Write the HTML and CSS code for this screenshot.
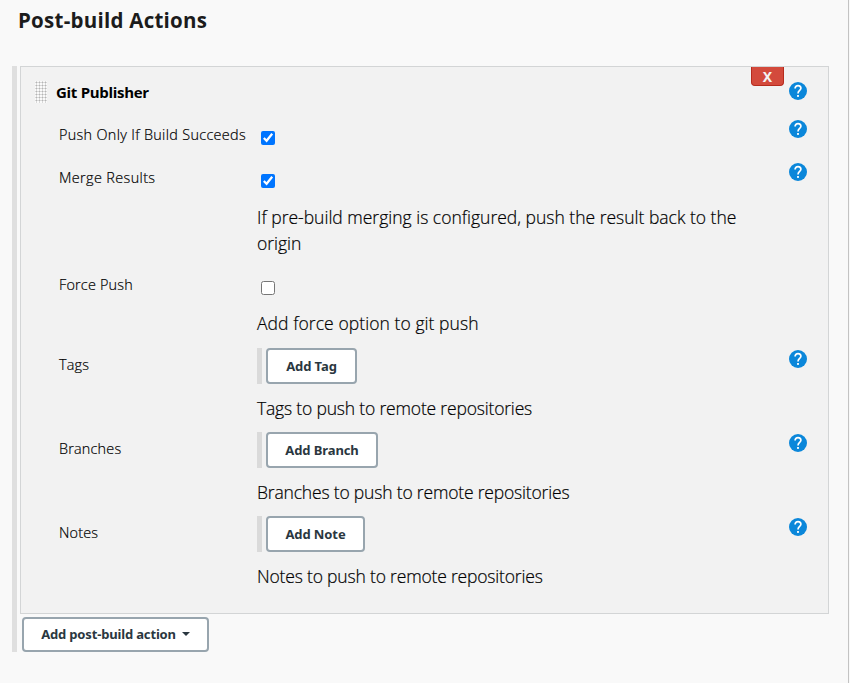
FILE: index.html
```html
<!DOCTYPE html>
<html lang="en">
<head>
<meta charset="utf-8">
<title>Post-build Actions</title>
<link rel="stylesheet" href="styles.css">
</head>
<body>
<svg class="defs" width="0" height="0" aria-hidden="true">
  <symbol id="help" viewBox="0 0 18 18">
    <circle cx="9" cy="9" r="9" fill="#0b87da"/>
    <path d="M6.100 6.600C6.100 4.600 7.300 3.600 9 3.600s2.900 1 2.900 2.700C11.900 8.300 9 8.600 9 11.400" fill="none" stroke="#fff" stroke-width="1.700"/>
    <rect x="8.100" y="13" width="1.800" height="1.900" fill="#fff"/>
  </symbol>
</svg>
<main class="page">
  <h1>Post-build Actions</h1>
  <div class="actions">
    <section class="panel">
      <header class="panel-head">
        <span class="grip"></span>
        <h2>Git Publisher</h2>
        <button class="delete">X</button>
        <svg class="help"><use href="#help"/></svg>
      </header>
      <div class="row single">
        <label for="succeeds">Push Only If Build Succeeds</label>
        <div class="field"><input type="checkbox" id="succeeds" checked></div>
        <svg class="help"><use href="#help"/></svg>
      </div>
      <div class="row merge">
        <label for="merge">Merge Results</label>
        <div class="field"><input type="checkbox" id="merge" checked>
          <p>If pre-build merging is configured, push the result back to the origin</p></div>
        <svg class="help"><use href="#help"/></svg>
      </div>
      <div class="row force">
        <label for="force">Force Push</label>
        <div class="field"><input type="checkbox" id="force">
          <p>Add force option to git push</p></div>
      </div>
      <div class="row list">
        <span class="label">Tags</span>
        <div class="field"><div class="adder"><button class="btn tag">Add Tag</button></div>
          <p>Tags to push to remote repositories</p></div>
        <svg class="help"><use href="#help"/></svg>
      </div>
      <div class="row list">
        <span class="label">Branches</span>
        <div class="field"><div class="adder"><button class="btn branch">Add Branch</button></div>
          <p>Branches to push to remote repositories</p></div>
        <svg class="help"><use href="#help"/></svg>
      </div>
      <div class="row list">
        <span class="label">Notes</span>
        <div class="field"><div class="adder"><button class="btn note">Add Note</button></div>
          <p>Notes to push to remote repositories</p></div>
        <svg class="help"><use href="#help"/></svg>
      </div>
    </section>
    <button class="btn add">Add post-build action<span class="caret"></span></button>
  </div>
</main>
</body>
</html>
```
FILE: styles.css
```css
* { box-sizing: border-box; }
body { margin: 0; background: #f9f9f9; color: #000; font-family: "Open Sans", sans-serif; }
.defs { display: block; }
.page { width: 849px; height: 683px; border-right: 1px solid #c3c3c3; padding: 6px 19px 0 12px; }
h1 { margin: 0 0 32px 6px; font-size: 20.5px; line-height: 28px; font-weight: 700; letter-spacing: 0.25px; color: #1c1c1c; }
.actions { border-left: 5px solid #dfdfdf; padding-left: 3px; height: 586px; }
.panel { height: 548px; background: #f2f2f2; border: 1px solid #d3d5d6; }
.panel-head { display: flex; height: 46px; padding: 0 21px 0 14px; }
.grip { width: 12px; height: 22px; margin-top: 14px; background: radial-gradient(circle at 1.5px 1.5px, #b5b5b5 0.9px, #fafafa 1.1px) 0 0 / 3px 3px; }
h2 { margin: 14px auto 0 9px; font-size: 15px; line-height: 22px; font-weight: 700; letter-spacing: -0.3px; }
.delete { width: 33px; height: 19px; margin-right: 5px; padding: 0; border: 1px solid #b62b1d; border-top: 0; border-radius: 0 0 4px 4px; background: #d34a3c; color: #f4f4f4; font: 700 14px/19px "Noto Sans", sans-serif; }
.help { display: block; width: 18px; height: 18px; flex: none; }
.panel-head .help { margin-top: 15px; }
.row { display: grid; grid-template-columns: 198px 532px 18px; padding-left: 38px; }
.row > .help { margin-top: 7px; }
.row label, .label { padding-top: 12px; font-size: 14.4px; line-height: 20px; font-weight: 300; letter-spacing: 0.2px; white-space: nowrap; -webkit-text-stroke: 0.2px #000; }
.row.single label { letter-spacing: 0.33px; }
.row.merge label { letter-spacing: 0.38px; }
.single { height: 43px; }
.merge { height: 107px; }
.force { height: 80px; }
.list { height: 84px; }
input { display: block; width: 14px; height: 14px; margin: 18px 0 0 4px; }
p { margin: 15px 0 0; width: 500px; font-size: 17.5px; line-height: 26px; font-weight: 300; -webkit-text-stroke: 0.2px #000; }
.merge p { margin-top: 16px; }
.force p { letter-spacing: 0.07px; }
.adder { margin-top: 5px; height: 36px; border-left: 5px solid #dadada; padding-left: 4px; }
.list p { margin-top: 11px; letter-spacing: -0.18px; }
.btn { display: block; height: 36px; padding: 0; border: 2px solid #98a5ae; border-radius: 4px; background: #fff; color: #2a3740; font: 700 13px/30px "Noto Sans", sans-serif; letter-spacing: -0.1px; white-space: nowrap; }
.tag { width: 91px; }
.branch { width: 112px; }
.note { width: 99px; }
.add { width: 187px; height: 35px; margin: 3px 0 0 2px; line-height: 29px; letter-spacing: -0.16px; }
.caret { display: inline-block; margin-left: 6px; border: 4px solid transparent; border-top-color: #2a3740; border-bottom: 0; vertical-align: 3px; }
```
